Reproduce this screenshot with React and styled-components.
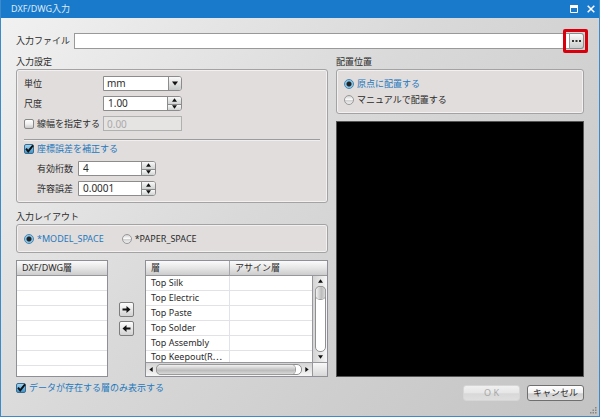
import React, { useState } from "react";
import styled, { createGlobalStyle, css } from "styled-components";

const GlobalStyle = createGlobalStyle`
  * {
    box-sizing: border-box;
  }
  body {
    margin: 0;
  }
  body, button, input, select, table {
    font-family: "Noto Sans", "Noto Sans CJK JP", sans-serif;
    font-size: 9px;
    line-height: 14px;
    color: #2b2b2b;
  }
`;

const Window = styled.div`
  position: relative;
  display: flex;
  flex-direction: column;
  min-height: 100vh;
  border: 1px solid #3b8bcb;
  border-top: 0;
  background: linear-gradient(135deg, #f2f2f2 0%, #d9d9d9 45%, #c3c3c3 100%);
`;

const TitleBar = styled.header`
  display: flex;
  align-items: center;
  height: 18px;
  padding: 0 0 0 10px;
  background: #1979ca;
`;

const Title = styled.h1`
  flex: 1;
  margin: 0;
  font-size: 9px;
  font-weight: 400;
  color: #dcebf8;
`;

const TitleButton = styled.button`
  display: flex;
  align-items: center;
  justify-content: center;
  width: 17px;
  height: 18px;
  padding: 0;
  border: 0;
  background: none;
`;

const Content = styled.main`
  flex: 1;
  display: flex;
  flex-direction: column;
  padding: 15px 15px 0;
`;

const FileRow = styled.div`
  display: flex;
  align-items: center;
  height: 16px;
`;

const FileLabel = styled.label`
  width: 58px;
  white-space: nowrap;
`;

const FileInput = styled.input`
  flex: 1;
  min-width: 0;
  height: 16px;
  padding: 0 4px;
  border: 1px solid #999;
  background: #fff;
`;

const BrowseWrap = styled.div`
  position: relative;
  display: flex;
`;

const Highlight = styled.div`
  position: absolute;
  top: -4px;
  right: -4px;
  bottom: -4px;
  left: -7px;
  border: 3px solid #d9000d;
  border-radius: 2px;
  pointer-events: none;
`;

const BrowseButton = styled.button`
  display: flex;
  align-items: center;
  justify-content: center;
  width: 14px;
  height: 16px;
  padding: 0;
  border: 1px solid #8c8c8c;
  border-left: 0;
  border-radius: 0 3px 3px 0;
  background: linear-gradient(#fafafa, #e2e2e2 50%, #c9cdcd);
`;

const Columns = styled.div`
  flex: 1;
  display: grid;
  grid-template-columns: 312fr 248fr;
  gap: 8px;
  margin-top: 6px;
`;

const Column = styled.div`
  display: flex;
  flex-direction: column;
  min-width: 0;
`;

const Group = styled.section`
  margin-bottom: 7px;
`;

const GroupTitle = styled.h2`
  margin: 0;
  height: 14px;
  font-size: 9px;
  font-weight: 400;
`;

const GroupBox = styled.div`
  display: flex;
  flex-direction: ${(props) => (props.$row ? "row" : "column")};
  gap: ${(props) => props.$gap || 5}px;
  padding: 6px 7px;
  border: 1px solid #a3a3a3;
  border-radius: 3px;
  background: #e1dddc;
  box-shadow: inset 0 0 0 1px #f2f0f0;
`;

const Row = styled.div`
  display: grid;
  grid-template-columns: ${(props) => (props.$sub ? "41px 78px" : "79px 79px")};
  align-items: center;
  height: 15px;
  padding-left: ${(props) => (props.$sub ? 13 : 0)}px;
  white-space: nowrap;
`;

const Separator = styled.hr`
  width: 100%;
  height: 2px;
  margin: 3px 0 -5px;
  border: 0;
  border-top: 1px solid #9c9c9c;
  border-bottom: 1px solid #f0eeee;
`;

const Choice = styled.label`
  display: flex;
  align-items: center;
  gap: 3px;
  height: 15px;
  white-space: nowrap;
  color: ${(props) => (props.$on ? "#1f78bd" : "#2b2b2b")};
`;

const CheckInput = styled.input`
  appearance: none;
  width: 10px;
  height: 10px;
  margin: 0;
  border: 1px solid #888;
  border-radius: 2px;
  background: linear-gradient(#fff, #f0f0f0 50%, #c9c9c9);
  &:checked {
    border-color: #3d6b8c;
    background: linear-gradient(#9fd3f2, #3f95cf);
  }
`;

const CheckWrap = styled.span`
  position: relative;
  display: flex;
  svg {
    position: absolute;
    top: 0;
    left: 0;
    pointer-events: none;
  }
`;

const RadioInput = styled.input`
  appearance: none;
  width: 10px;
  height: 10px;
  margin: 0;
  border: 1px solid #999;
  border-radius: 50%;
  background: linear-gradient(#d5d5d5, #fafafa 45%, #cfcfcf 50%, #f0f0f0);
  &:checked {
    border-color: #4c86ad;
    background: radial-gradient(circle, #222 0 2px, #7fc0e8 3px, #a8daf5 5px);
  }
`;

const Field = styled.div`
  display: flex;
  height: 15px;
  border: 1px solid #8c8c8c;
  border-radius: 0 3px 3px 0;
  background: #fff;
  overflow: hidden;
`;

const fieldText = css`
  flex: 1;
  min-width: 0;
  padding: 0 4px;
  border: 0;
  background: #fff;
  font-size: 10px;
  line-height: 13px;
`;

const NumberInput = styled.input`
  ${fieldText}
`;

const Select = styled.select`
  ${fieldText}
  appearance: none;
  padding: 0 3px;
`;

const SelectArrow = styled.span`
  display: flex;
  align-items: center;
  justify-content: center;
  width: 13px;
  border-left: 1px solid #8c8c8c;
  background: linear-gradient(#fafafa, #e2e2e2 50%, #c4c8c8);
  pointer-events: none;
`;

const SpinButtons = styled.div`
  display: grid;
  grid-template-rows: 1fr 1fr;
  width: 14px;
  border-left: 1px solid #8c8c8c;
`;

const SpinButton = styled.button`
  display: flex;
  align-items: center;
  justify-content: center;
  min-height: 0;
  padding: 0;
  border: 0;
  background: linear-gradient(#f8f8f8, #d0d3d3);
  & + & {
    border-top: 1px solid #8c8c8c;
  }
`;

const DisabledInput = styled.input`
  width: 100%;
  height: 15px;
  padding: 0 3px;
  border: 1px solid #b0b0b0;
  background: #e6e4e3;
  font-size: 10px;
  line-height: 13px;
  color: #aaa;
`;

const Lists = styled.div`
  display: grid;
  grid-template-columns: 92fr 37px 183fr;
`;

const ListPanel = styled.div`
  height: 117px;
  min-width: 0;
  overflow: hidden;
  border: 1px solid #8f8f96;
  background: #fff;
`;

const ScrollPanel = styled(ListPanel)`
  display: grid;
  grid-template-columns: minmax(0, 1fr) 15px;
  grid-template-rows: 15px 86px 14px;
`;

const TableClip = styled.div`
  grid-row: 1 / 3;
  overflow: hidden;
`;

const header = css`
  border-bottom: 1px solid #97979c;
  background: linear-gradient(#fbfbfb, #e6e6e6 50%, #cccccc);
`;

const Table = styled.table`
  width: 100%;
  border-collapse: separate;
  border-spacing: 0;
  table-layout: fixed;
  th {
    height: 15px;
    padding: 0 5px;
    font-weight: 400;
    text-align: left;
    line-height: 14px;
    ${header}
  }
  td {
    height: 15px;
    padding: 0 5px;
    border-bottom: 1px solid #e2e2e6;
    line-height: 14px;
    white-space: nowrap;
  }
  th + th {
    border-left: 1px solid #a5a5aa;
  }
  td + td {
    border-left: 1px solid #e2e2ea;
  }
`;

const LastRow = styled.tr`
  td {
    height: 11px;
    border-bottom: 0;
    line-height: 11px;
  }
`;

const HeaderCorner = styled.div`
  ${header}
`;

const ScrollBar = styled.div`
  display: flex;
  flex-direction: ${(props) => (props.$vertical ? "column" : "row")};
  align-items: center;
  gap: 1px;
  padding: ${(props) => (props.$vertical ? "1px 0" : "0 1px")};
  border-top: ${(props) => (props.$vertical ? 0 : "1px solid #97979c")};
  border-left: ${(props) => (props.$vertical ? "1px solid #97979c" : 0)};
  background: linear-gradient(
    ${(props) => (props.$vertical ? "to right" : "to bottom")},
    #d4d4d4,
    #f6f6f6
  );
`;

const ScrollArrow = styled.button`
  display: flex;
  align-items: center;
  justify-content: center;
  width: 8px;
  height: 8px;
  padding: 0;
  border: 0;
  background: none;
`;

const Track = styled.div`
  flex: 1;
  display: flex;
  width: ${(props) => (props.$vertical ? "11px" : "auto")};
  height: ${(props) => (props.$vertical ? "auto" : "11px")};
  border: 1px solid #8f8f8f;
  border-radius: 5px;
  background: #fff;
`;

const Thumb = styled.div`
  width: ${(props) => (props.$vertical ? "100%" : "96%")};
  height: ${(props) => (props.$vertical ? "12px" : "100%")};
  border-radius: 4px;
  background: linear-gradient(
    ${(props) => (props.$vertical ? "to right" : "to bottom")},
    #f2f2f2,
    #bcbcbc 60%,
    #d8d8d8
  );
  box-shadow: 0 0 0 1px #9a9a9a;
`;

const ScrollCorner = styled.div`
  border-top: 1px solid #97979c;
  border-left: 1px solid #97979c;
  background: linear-gradient(#f8f8f8, #d8d8d8);
`;

const MoveButtons = styled.div`
  display: flex;
  flex-direction: column;
  align-items: center;
  justify-content: center;
  gap: 4px;
`;

const MoveButton = styled.button`
  display: flex;
  align-items: center;
  justify-content: center;
  width: 15px;
  height: 15px;
  padding: 0;
  border: 1px solid #7d7d7d;
  border-radius: 2px;
  background: linear-gradient(#fdfdfd, #d2d2d2);
`;

const Preview = styled.div`
  flex: 1;
  border: 1px solid #555;
  background: #000;
`;

const Footer = styled.footer`
  display: flex;
  align-items: flex-start;
  gap: 7px;
  height: 39px;
  padding-top: 8px;
`;

const FooterCheck = styled.div`
  flex: 1;
  margin-top: -5px;
`;

const DialogButton = styled.button`
  width: 57px;
  height: 16px;
  padding: 0;
  border: 1px solid #6f6f6f;
  border-radius: 3px;
  background: linear-gradient(#fff, #f0f0f0 50%, #cfcfcf 55%, #dedede);
  &:disabled {
    border-color: #d6d6d6;
    background: linear-gradient(#f0f0f0, #e6e6e6 50%, #d8d8d8 55%, #dedede);
    color: #a8a8a8;
  }
`;

const Grip = styled.svg`
  position: absolute;
  right: 2px;
  bottom: 2px;
`;

const Triangle = ({ dir, size = 5 }) => {
  const points = {
    up: "0,4 6,4 3,0",
    down: "0,0 6,0 3,4",
    left: "4,0 4,6 0,3",
    right: "0,0 0,6 4,3",
  };
  const flat = dir === "up" || dir === "down";
  return (
    <svg
      width={flat ? size : size - 1}
      height={flat ? size - 1 : size}
      viewBox={flat ? "0 0 6 4" : "0 0 4 6"}
    >
      <polygon points={points[dir]} fill="#111" />
    </svg>
  );
};

const Check = ({ label, checked, onChange }) => (
  <Choice $on={checked}>
    <CheckWrap>
      <CheckInput type="checkbox" checked={checked} onChange={onChange} />
      {checked && (
        <svg width="10" height="10" viewBox="0 0 10 10">
          <path d="M2 4.6 L4.2 7.4 L9 1.4" fill="none" stroke="#111" strokeWidth="1.9" />
        </svg>
      )}
    </CheckWrap>
    {label}
  </Choice>
);

const Radio = ({ label, name, checked, onChange }) => (
  <Choice $on={checked}>
    <RadioInput type="radio" name={name} checked={checked} onChange={onChange} />
    {label}
  </Choice>
);

const Spin = ({ id, initial, step, digits }) => {
  const [value, setValue] = useState(initial);
  const change = (by) => setValue((Number(value) + by).toFixed(digits));
  return (
    <Field>
      <NumberInput id={id} value={value} onChange={(e) => setValue(e.target.value)} />
      <SpinButtons>
        <SpinButton aria-label="+" onClick={() => change(step)}>
          <Triangle dir="up" />
        </SpinButton>
        <SpinButton aria-label="-" onClick={() => change(-step)}>
          <Triangle dir="down" />
        </SpinButton>
      </SpinButtons>
    </Field>
  );
};

const layers = ["Top Silk", "Top Electric", "Top Paste", "Top Solder", "Top Assembly"];

const App = () => {
  const [useWidth, setUseWidth] = useState(false);
  const [correct, setCorrect] = useState(true);
  const [onlyData, setOnlyData] = useState(true);
  const [layout, setLayout] = useState("model");
  const [place, setPlace] = useState("origin");

  return (
    <Window>
      <GlobalStyle />
      <TitleBar>
        <Title>DXF/DWG入力</Title>
        <TitleButton aria-label="最大化">
          <svg width="8" height="8" viewBox="0 0 8 8">
            <path d="M0.5 1 V7.5 H7.5 V1" fill="none" stroke="#fff" />
            <path d="M0 1.5 H8" stroke="#fff" strokeWidth="3" />
          </svg>
        </TitleButton>
        <TitleButton aria-label="閉じる">
          <svg width="8" height="8" viewBox="0 0 8 8">
            <path d="M0.7 0.7 L7.3 7.3 M7.3 0.7 L0.7 7.3" stroke="#fff" strokeWidth="1.5" />
          </svg>
        </TitleButton>
      </TitleBar>
      <Content>
        <FileRow>
          <FileLabel htmlFor="file">入力ファイル</FileLabel>
          <FileInput id="file" />
          <BrowseWrap>
            <BrowseButton aria-label="参照">
              <svg width="9" height="2" viewBox="0 0 9 2">
                <path d="M0 1 H2 M3.5 1 H5.5 M7 1 H9" stroke="#333" strokeWidth="2" />
              </svg>
            </BrowseButton>
            <Highlight />
          </BrowseWrap>
        </FileRow>
        <Columns>
          <Column>
            <Group>
              <GroupTitle>入力設定</GroupTitle>
              <GroupBox>
                <Row>
                  <label htmlFor="unit">単位</label>
                  <Field>
                    <Select id="unit">
                      <option>mm</option>
                    </Select>
                    <SelectArrow>
                      <Triangle dir="down" size={6} />
                    </SelectArrow>
                  </Field>
                </Row>
                <Row>
                  <label htmlFor="scale">尺度</label>
                  <Spin id="scale" initial="1.00" step={0.1} digits={2} />
                </Row>
                <Row>
                  <Check
                    label="線幅を指定する"
                    checked={useWidth}
                    onChange={() => setUseWidth(!useWidth)}
                  />
                  <DisabledInput aria-label="線幅" defaultValue="0.00" disabled={!useWidth} />
                </Row>
                <Separator />
                <Check
                  label="座標誤差を補正する"
                  checked={correct}
                  onChange={() => setCorrect(!correct)}
                />
                <Row $sub>
                  <label htmlFor="digits">有効桁数</label>
                  <Spin id="digits" initial="4" step={1} digits={0} />
                </Row>
                <Row $sub>
                  <label htmlFor="tolerance">許容誤差</label>
                  <Spin id="tolerance" initial="0.0001" step={0.0001} digits={4} />
                </Row>
              </GroupBox>
            </Group>
            <Group>
              <GroupTitle>入力レイアウト</GroupTitle>
              <GroupBox $row $gap={18}>
                <Radio
                  name="layout"
                  label="*MODEL_SPACE"
                  checked={layout === "model"}
                  onChange={() => setLayout("model")}
                />
                <Radio
                  name="layout"
                  label="*PAPER_SPACE"
                  checked={layout === "paper"}
                  onChange={() => setLayout("paper")}
                />
              </GroupBox>
            </Group>
            <Lists>
              <ListPanel>
                <Table>
                  <thead>
                    <tr>
                      <th>DXF/DWG層</th>
                    </tr>
                  </thead>
                  <tbody>
                    {[1, 2, 3, 4, 5, 6, 7].map((n) => (
                      <tr key={n}>
                        <td />
                      </tr>
                    ))}
                  </tbody>
                </Table>
              </ListPanel>
              <MoveButtons>
                <MoveButton aria-label="追加">
                  <svg width="9" height="9" viewBox="0 0 9 9">
                    <path d="M0.5 3.5 H4.5 V1 L8.5 4.5 L4.5 8 V5.5 H0.5 Z" fill="#111" />
                  </svg>
                </MoveButton>
                <MoveButton aria-label="解除">
                  <svg width="9" height="9" viewBox="0 0 9 9">
                    <path d="M8.5 3.5 H4.5 V1 L0.5 4.5 L4.5 8 V5.5 H8.5 Z" fill="#111" />
                  </svg>
                </MoveButton>
              </MoveButtons>
              <ScrollPanel>
                <TableClip>
                  <Table>
                    <thead>
                      <tr>
                        <th>層</th>
                        <th>アサイン層</th>
                      </tr>
                    </thead>
                    <tbody>
                      {layers.map((layer) => (
                        <tr key={layer}>
                          <td>{layer}</td>
                          <td />
                        </tr>
                      ))}
                      <LastRow>
                        <td>Top Keepout(R⋯</td>
                        <td />
                      </LastRow>
                    </tbody>
                  </Table>
                </TableClip>
                <HeaderCorner />
                <ScrollBar $vertical>
                  <ScrollArrow aria-label="上">
                    <Triangle dir="up" />
                  </ScrollArrow>
                  <Track $vertical>
                    <Thumb $vertical />
                  </Track>
                  <ScrollArrow aria-label="下">
                    <Triangle dir="down" />
                  </ScrollArrow>
                </ScrollBar>
                <ScrollBar>
                  <ScrollArrow aria-label="左">
                    <Triangle dir="left" />
                  </ScrollArrow>
                  <Track>
                    <Thumb />
                  </Track>
                  <ScrollArrow aria-label="右">
                    <Triangle dir="right" />
                  </ScrollArrow>
                </ScrollBar>
                <ScrollCorner />
              </ScrollPanel>
            </Lists>
          </Column>
          <Column>
            <Group>
              <GroupTitle>配置位置</GroupTitle>
              <GroupBox $gap={1}>
                <Radio
                  name="place"
                  label="原点に配置する"
                  checked={place === "origin"}
                  onChange={() => setPlace("origin")}
                />
                <Radio
                  name="place"
                  label="マニュアルで配置する"
                  checked={place === "manual"}
                  onChange={() => setPlace("manual")}
                />
              </GroupBox>
            </Group>
            <Preview />
          </Column>
        </Columns>
        <Footer>
          <FooterCheck>
            <Check
              label="データが存在する層のみ表示する"
              checked={onlyData}
              onChange={() => setOnlyData(!onlyData)}
            />
          </FooterCheck>
          <DialogButton disabled>O K</DialogButton>
          <DialogButton>キャンセル</DialogButton>
        </Footer>
      </Content>
      <Grip width="7" height="7" viewBox="0 0 7 7">
        <path
          d="M5 0h1.5v1.5h-1.5z M2.5 2.5h1.5v1.5h-1.5z M5 2.5h1.5v1.5h-1.5z M0 5h1.5v1.5h-1.5z M2.5 5h1.5v1.5h-1.5z M5 5h1.5v1.5h-1.5z"
          fill="#858585"
        />
      </Grip>
    </Window>
  );
};

export default App;
